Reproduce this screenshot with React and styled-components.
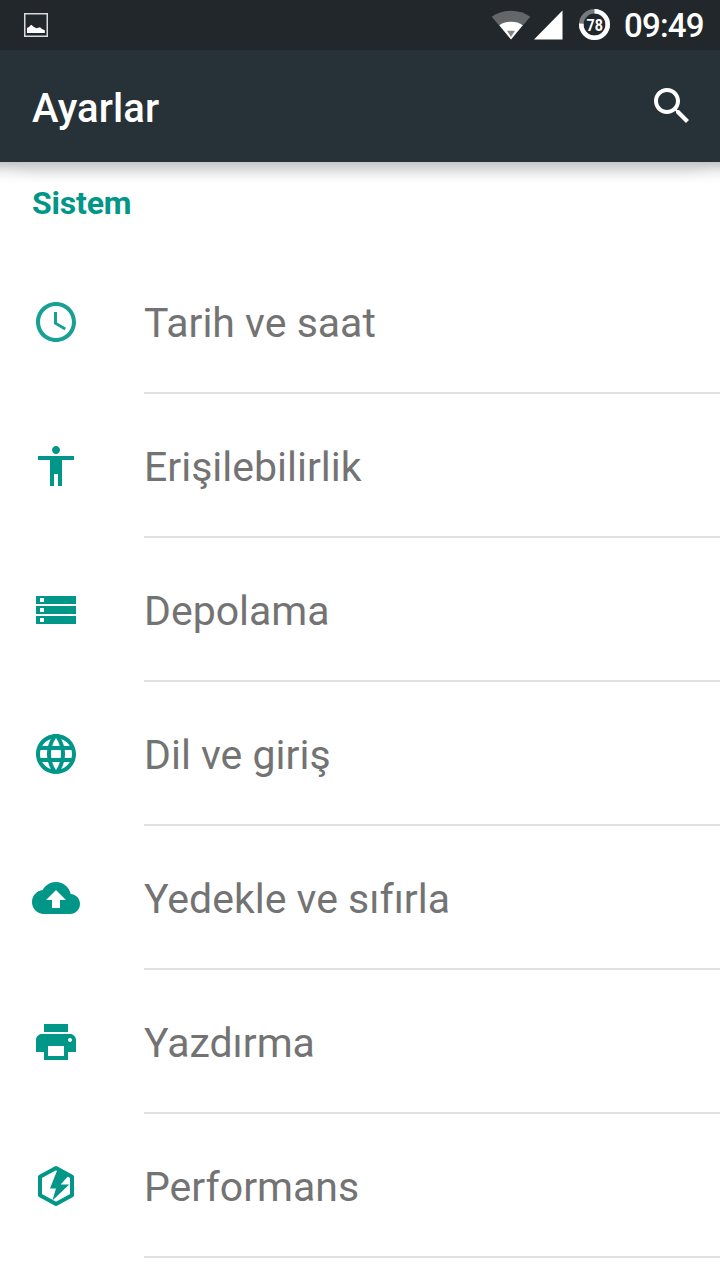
import React from 'react';
import styled, { createGlobalStyle } from 'styled-components';

const GlobalStyle = createGlobalStyle`
  * { box-sizing: border-box; }
  body { margin: 0; background: #fff; }
`;

const Screen = styled.div`
  width: 720px;
  height: 1280px;
  overflow: hidden;
  background: #fff;
  font-family: Roboto, sans-serif;
  display: flex;
  flex-direction: column;
`;

const StatusBar = styled.header`
  flex: none;
  height: 50px;
  background: #22272b;
  display: flex;
  align-items: center;
  padding: 0 16px 0 24px;
`;

const StatusIcons = styled.div`
  margin-left: auto;
  display: flex;
  align-items: center;
  height: 50px;
`;

const Glyph = styled.svg`
  flex: none;
  display: block;
  width: ${(p) => p.$w}px;
  height: ${(p) => p.$h}px;
  margin-right: ${(p) => p.$gap || 0}px;
`;

const Clock = styled.span`
  width: 80px;
  color: #fff;
  font-size: 33px;
  font-weight: 500;
  letter-spacing: -0.8px;
  line-height: 50px;
  padding-top: 2px;
  white-space: nowrap;
`;

const AppBar = styled.div`
  flex: none;
  height: 112px;
  background: #273238;
  display: flex;
  align-items: center;
  justify-content: space-between;
  padding: 0 24px 0 32px;
`;

const Title = styled.h1`
  margin: 0;
  padding-top: 6px;
  color: #fff;
  font-size: 40px;
  font-weight: 500;
  letter-spacing: 0.1px;
  line-height: 48px;
`;

const SearchButton = styled.button`
  border: 0;
  padding: 0;
  background: none;
  color: #fff;
  height: 48px;
`;

const Content = styled.main`
  flex: 1;
  background:
    radial-gradient(ellipse 40px 20px at 0 100%, rgba(255, 255, 255, 0.6), rgba(255, 255, 255, 0)) 0 0 / 100% 21px no-repeat,
    radial-gradient(ellipse 40px 20px at 100% 100%, rgba(255, 255, 255, 0.6), rgba(255, 255, 255, 0)) 0 0 / 100% 21px no-repeat,
    linear-gradient(rgba(0, 0, 0, 0.22), rgba(0, 0, 0, 0.14) 7px, rgba(0, 0, 0, 0.05) 14px, rgba(0, 0, 0, 0) 21px) no-repeat;
`;

const SectionTitle = styled.h2`
  margin: 0;
  height: 88px;
  padding: 22px 32px 0;
  color: #009688;
  font-size: 32px;
  font-weight: 700;
  letter-spacing: -0.2px;
  line-height: 38px;
`;

const List = styled.ul`
  list-style: none;
  margin: 0;
  padding: 0;
`;

const Row = styled.li`
  height: 144px;
  display: flex;
  align-items: center;
  padding-left: 32px;
`;

const RowIcon = styled.svg`
  flex: none;
  width: 48px;
  height: 48px;
  margin-right: 64px;
  fill: #009688;
  opacity: ${(p) => p.$opacity || 1};
`;

const RowLabel = styled.span`
  flex: 1;
  height: 144px;
  border-bottom: 2px solid #e0e0e0;
  color: #737373;
  font-size: 41px;
  line-height: 147px;
  white-space: nowrap;
`;

const items = [
  {
    label: 'Tarih ve saat',
    opacity: 0.9,
    icon: <path d="M11.99 2C6.47 2 2 6.48 2 12s4.47 10 9.99 10C17.52 22 22 17.52 22 12S17.52 2 11.99 2zM12 20c-4.42 0-8-3.58-8-8s3.58-8 8-8 8 3.58 8 8-3.58 8-8 8zm.5-13H11v6l5.25 3.15.75-1.23-4.5-2.67z" />,
  },
  {
    label: 'Erişilebilirlik',
    icon: <path d="M12 2c1.1 0 2 .9 2 2s-.9 2-2 2-2-.9-2-2 .9-2 2-2zm9 7h-6v13h-2v-6h-2v6H9V9H3V7h18v2z" />,
  },
  {
    label: 'Depolama',
    icon: <path d="M2 19h20v-4H2v4zm2-3h2v2H4v-2zM2 5v4h20V5H2zm4 3H4V6h2v2zm-4 6h20v-4H2v4zm2-3h2v2H4v-2z" />,
  },
  {
    label: 'Dil ve giriş',
    icon: <path d="M11.99 2C6.47 2 2 6.48 2 12s4.47 10 9.99 10C17.52 22 22 17.52 22 12S17.52 2 11.99 2zm6.93 6h-2.95c-.32-1.25-.78-2.45-1.38-3.56 1.84.63 3.37 1.91 4.33 3.56zM12 4.04c.83 1.2 1.48 2.53 1.91 3.96h-3.82c.43-1.43 1.08-2.76 1.91-3.96zM4.26 14C4.1 13.36 4 12.69 4 12s.1-1.36.26-2h3.38c-.08.66-.14 1.32-.14 2 0 .68.06 1.34.14 2H4.26zm.82 2h2.95c.32 1.25.78 2.45 1.38 3.56-1.84-.63-3.37-1.9-4.33-3.56zm2.95-8H5.08c.96-1.66 2.49-2.93 4.33-3.56C8.81 5.55 8.35 6.75 8.03 8zM12 19.96c-.83-1.2-1.48-2.53-1.91-3.96h3.82c-.43 1.43-1.08 2.76-1.91 3.96zM14.34 14H9.66c-.09-.66-.16-1.32-.16-2 0-.68.07-1.35.16-2h4.68c.09.65.16 1.32.16 2 0 .68-.07 1.34-.16 2zm.25 5.56c.6-1.11 1.06-2.31 1.38-3.56h2.95c-.96 1.65-2.49 2.93-4.33 3.56zM16.36 14c.08-.66.14-1.32.14-2 0-.68-.06-1.34-.14-2h3.38c.16.64.26 1.31.26 2s-.1 1.36-.26 2h-3.38z" />,
  },
  {
    label: 'Yedekle ve sıfırla',
    icon: <path d="M19.35 10.04C18.67 6.59 15.64 4 12 4 9.11 4 6.6 5.64 5.35 8.04 2.34 8.36 0 10.91 0 14c0 3.31 2.69 6 6 6h13c2.76 0 5-2.24 5-5 0-2.64-2.05-4.78-4.65-4.96zM14 13v4h-4v-4H7l5-5 5 5h-3z" />,
  },
  {
    label: 'Yazdırma',
    icon: <path d="M19 8H5c-1.66 0-3 1.34-3 3v6h4v4h12v-4h4v-6c0-1.66-1.34-3-3-3zm-3 11H8v-5h8v5zm3-7c-.55 0-1-.45-1-1s.45-1 1-1 1 .45 1 1-.45 1-1 1zm-1-9H6v4h12V3z" />,
  },
  {
    label: 'Performans',
    icon: (
      <>
        <path d="M12 3 20 7.4V16.6L12 21 4 16.6V7.4Z" fill="none" stroke="#009688" strokeWidth="2" strokeLinejoin="round" />
        <path d="M12.8 3.6 9 13.2h3L10.2 19.2 18.6 11.3H14.3L18.8 6.2Z" />
      </>
    ),
  },
];

export default function App() {
  return (
    <Screen>
      <GlobalStyle />
      <StatusBar>
        <Glyph $w={24} $h={24} viewBox="0 0 24 24">
          <rect x="0.75" y="0.75" width="22.5" height="22.5" fill="none" stroke="#d8dada" strokeWidth="1.5" />
          <path d="M3 20V15L5 14 7.2 11.8 10 14 12.5 15.2 16 14.2 18 16 20.8 17.2V20Z" fill="#fff" />
        </Glyph>
        <StatusIcons>
          <Glyph $w={40} $h={50} $gap={3} viewBox="0 0 40 50">
            <path d="M20 39.5 0.7 16.8Q9 10.8 20 10.8T39.3 16.8Z" fill="#646769" />
            <path d="M20 39.5 8.3 25.2Q13 21.8 20 21.8T31.7 25.2Z" fill="#fff" />
            <path d="M16 30.7H24L20 37Z" fill="#858585" />
          </Glyph>
          <Glyph $w={29} $h={50} $gap={16} viewBox="0 0 29 50">
            <path d="M0 39.5 28.5 10.5V39.5Z" fill="#fff" />
          </Glyph>
          <Glyph $w={32} $h={50} $gap={13} viewBox="0 0 32 50">
            <circle cx="15.5" cy="24.5" r="13.2" fill="none" stroke="#777a7c" strokeWidth="4.6" />
            <circle cx="15.5" cy="24.5" r="13.2" fill="none" stroke="#fff" strokeWidth="4.6" pathLength="100" strokeDasharray="76 24" transform="rotate(-90 15.5 24.5)" />
            <text x="7.5" y="30.5" fill="#fff" fontSize="17" fontWeight="700" textLength="16.4" lengthAdjust="spacingAndGlyphs">78</text>
          </Glyph>
          <Clock>09:49</Clock>
        </StatusIcons>
      </StatusBar>
      <AppBar>
        <Title>Ayarlar</Title>
        <SearchButton aria-label="Ara">
          <Glyph $w={48} $h={48} viewBox="0 0 24 24" fill="currentColor">
            <path d="M15.5 14h-.79l-.28-.27C15.41 12.59 16 11.11 16 9.5 16 5.91 13.09 3 9.5 3S3 5.91 3 9.5 5.91 16 9.5 16c1.61 0 3.09-.59 4.23-1.57l.27.28v.79l5 4.99L20.49 19l-4.99-5zm-6 0C7.01 14 5 11.99 5 9.5S7.01 5 9.5 5 14 7.01 14 9.5 11.99 14 9.5 14z" />
          </Glyph>
        </SearchButton>
      </AppBar>
      <Content>
        <SectionTitle>Sistem</SectionTitle>
        <List>
          {items.map((item) => (
            <Row key={item.label}>
              <RowIcon viewBox="0 0 24 24" $opacity={item.opacity}>{item.icon}</RowIcon>
              <RowLabel>{item.label}</RowLabel>
            </Row>
          ))}
        </List>
      </Content>
    </Screen>
  );
}
